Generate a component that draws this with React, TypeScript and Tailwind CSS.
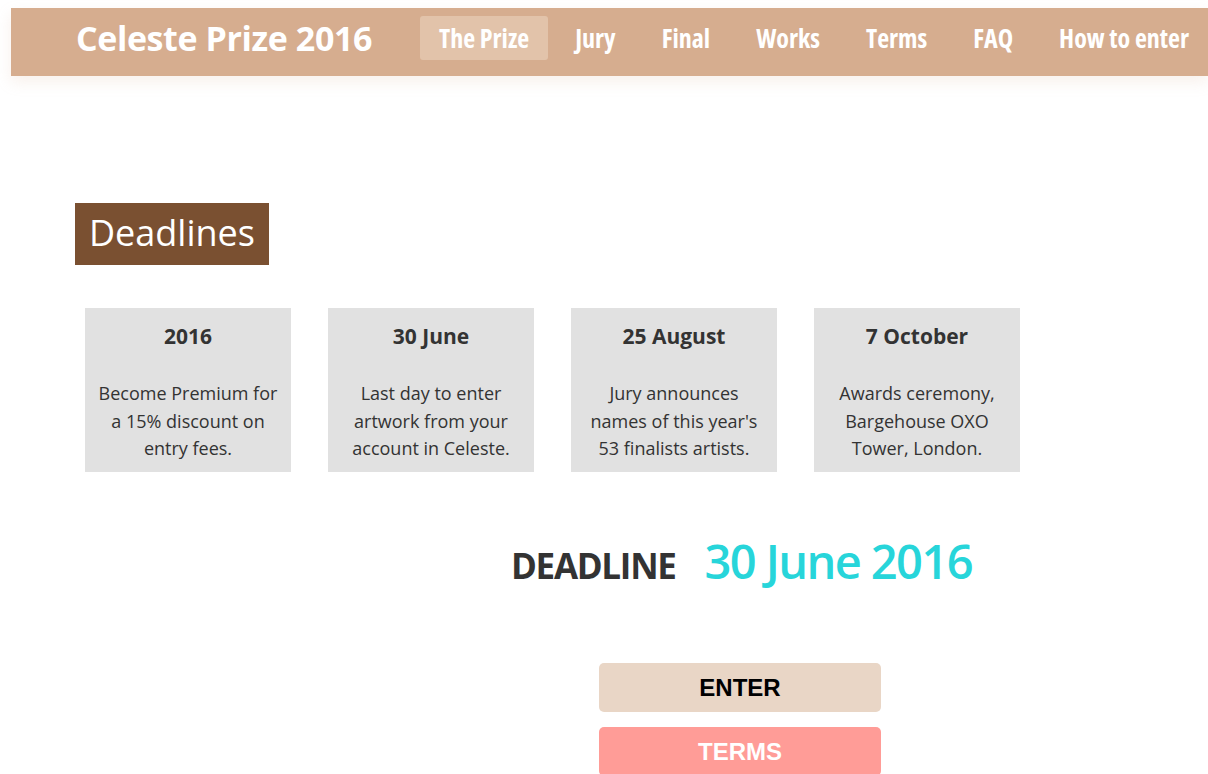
import { useState } from "react";

const navItems = ["The Prize", "Jury", "Final", "Works", "Terms", "FAQ", "How to enter"];

const deadlines = [
  { title: "2016", text: "Become Premium for a 15% discount on entry fees." },
  { title: "30 June", text: "Last day to enter artwork from your account in Celeste." },
  { title: "25 August", text: "Jury announces names of this year's 53 finalists artists." },
  { title: "7 October", text: "Awards ceremony, Bargehouse OXO Tower, London." },
];

function TopBar({ active, onSelect }: { active: string; onSelect: (item: string) => void }) {
  return (
    <div className="pt-[8px] pl-[11px]">
      <header className="flex h-[68px] items-center overflow-hidden bg-[#d6ad8f] pb-[8px] pl-[65px] shadow-[0_6px_14px_rgba(214,173,143,0.18)]">
        <h1 className="mr-[48px] shrink-0 whitespace-nowrap text-[34px] font-bold leading-none tracking-[-0.4px] text-white">
          Celeste Prize 2016
        </h1>
        <nav className="flex shrink-0 items-center gap-[8px]">
          {navItems.map((item) => (
            <button
              key={item}
              onClick={() => onSelect(item)}
              className={
                "h-[44px] shrink-0 whitespace-nowrap rounded-[3px] px-[19px] text-[26px] font-bold text-white [font-stretch:75%] " +
                (item === active ? "bg-[#e2c3aa] text-[#fdf8f3]" : "")
              }
            >
              {item}
            </button>
          ))}
        </nav>
      </header>
    </div>
  );
}

export default function App() {
  const [active, setActive] = useState("The Prize");

  return (
    <div className="min-h-[774px] overflow-hidden bg-white font-['Open_Sans',sans-serif] text-[#333]">
      <TopBar active={active} onSelect={setActive} />

      {/* Deadlines */}
      <section className="pl-[75px] pt-[127px]">
        <h2 className="inline-block bg-[#7a5031] px-[14px] pt-[7px] pb-[9px] text-[36px] leading-[46px] text-white">
          Deadlines
        </h2>

        <div className="mt-[43px] ml-[10px] flex gap-[37px]">
          {deadlines.map((d) => (
            <div key={d.title} className="h-[164px] w-[206px] bg-[#e1e1e1] px-[12px] pt-[13px] text-center">
              <p className="text-[21px] font-bold leading-[30px] text-[#333]">{d.title}</p>
              <p className="mt-[29px] text-[18px] leading-[27.5px] text-[#333]">{d.text}</p>
            </div>
          ))}
        </div>
      </section>

      {/* Entry deadline */}
      <div className="mt-[66px] flex items-baseline whitespace-nowrap pl-[511px]">
        <span className="text-[35px] font-bold leading-none tracking-[-1.3px] text-[#333]">DEADLINE</span>
        <span className="ml-[29px] text-[47px] font-semibold leading-none tracking-[-1.6px] text-[#27d5da]">
          30 June 2016
        </span>
      </div>

      <div className="mt-[78px] flex flex-col gap-[15px] pl-[599px] font-['Liberation_Sans',Arial,sans-serif]">
        <button className="h-[49px] w-[282px] rounded-[5px] bg-[#e9d6c6] text-[24px] font-bold text-black">
          ENTER
        </button>
        <button className="h-[49px] w-[282px] rounded-[5px] bg-[#ff9c97] text-[24px] font-bold text-white">
          TERMS
        </button>
      </div>
    </div>
  );
}
